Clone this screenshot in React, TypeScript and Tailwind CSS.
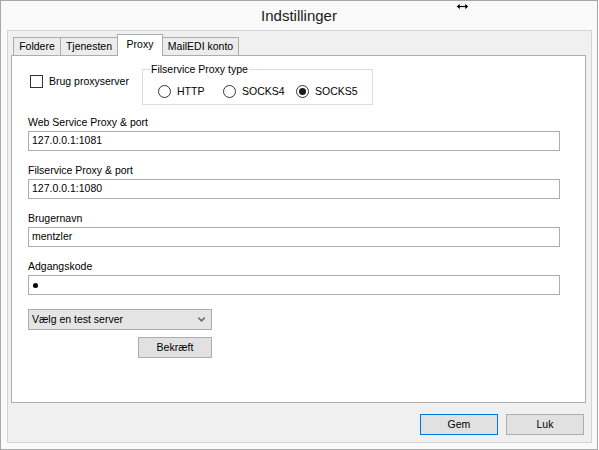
import { ChevronDown } from 'lucide-react';

function Checkbox() {
  return <div className="w-[13px] h-[13px] border border-[#333333] bg-white" />;
}

function Radio({ label, checked, width }: { label: string; checked?: boolean; width: string }) {
  return (
    <div className={`flex items-center ${width}`}>
      <div className="w-[13px] h-[13px] rounded-full border border-[#333333] bg-white flex items-center justify-center">
        {checked && <div className="w-[7px] h-[7px] rounded-full bg-[#1a1a1a]" />}
      </div>
      <span className="ml-[6px] leading-[13px]">{label}</span>
    </div>
  );
}

function Field({ label, value, password }: { label: string; value: string; password?: boolean }) {
  return (
    <div className="flex flex-col">
      <div className="h-[16px] leading-[16px]">{label}</div>
      <div className="mt-[1px] h-[20px] w-[532px] border border-[#adadad] bg-white pl-[3px] flex items-center">
        {password ? <div className="ml-[1px] w-[5px] h-[5px] rounded-full bg-black" /> : <span>{value}</span>}
      </div>
    </div>
  );
}

function Tab({ label, selected, width }: { label: string; selected?: boolean; width: string }) {
  if (selected) {
    return (
      <div
        className={`${width} -ml-px h-[22px] -mb-px relative z-10 bg-white border border-b-0 border-[#adadad] flex justify-center pt-[2px]`}
      >
        {label}
      </div>
    );
  }
  return (
    <div className={`${width} -ml-px first:ml-0 h-[18px] bg-[#ececec] border border-b-0 border-[#adadad] flex items-center justify-center`}>
      {label}
    </div>
  );
}

export default function App() {
  return (
    <div className="w-[599px] h-[450px] bg-white font-['Liberation_Sans',Arial,sans-serif] text-[10.5px] text-black relative">
      <div className="w-[598px] h-[450px] border border-[#a8a8a8] bg-[#f9f9f9] flex flex-col">
        <div className="h-[29px] flex items-center justify-center text-[15px] text-[#1a1a1a] pt-[1px]">
          Indstillinger
        </div>
        <div className="ml-[6px] w-[585px] h-[413px] border border-[#d4d4d4] bg-[#f0f0f0] flex flex-col pl-[3px] pr-[5px]">
          <div className="flex items-end pl-[2px] pt-[2px] h-[24px]">
            <Tab label="Foldere" width="w-[48px]" />
            <Tab label="Tjenesten" width="w-[58px]" />
            <Tab label="Proxy" width="w-[46px]" selected />
            <Tab label="MailEDI konto" width="w-[77px]" />
          </div>
          <div className="h-[348px] w-[575px] border border-[#adadad] bg-white px-[16px] pt-[13px]">
            <div className="flex h-[36px]">
              <div className="w-[114px] pt-[6px] pl-[2px] flex items-start">
                <Checkbox />
                <span className="ml-[6px] leading-[13px]">Brug proxyserver</span>
              </div>
              <div className="relative w-[231px] h-[36px] border border-[#dcdcdc]">
                <span className="absolute left-[7px] -top-[9px] bg-white px-[1px] leading-[16px]">
                  Filservice Proxy type
                </span>
                <div className="flex items-center mt-[15px] ml-[15px]">
                  <Radio label="HTTP" width="w-[65px]" />
                  <Radio label="SOCKS4" width="w-[73px]" />
                  <Radio label="SOCKS5" width="w-[70px]" checked />
                </div>
              </div>
            </div>
            <div className="mt-[9px] flex flex-col gap-[11px]">
              <Field label="Web Service Proxy & port" value="127.0.0.1:1081" />
              <Field label="Filservice Proxy & port" value="127.0.0.1:1080" />
              <Field label="Brugernavn" value="mentzler" />
              <Field label="Adgangskode" value="" password />
            </div>
            <div className="mt-[14px] w-[184px] h-[21px] border border-[#acacac] bg-[#e5e5e5] flex items-center justify-between pl-[3px] pr-[4px]">
              <span>Vælg en test server</span>
              <ChevronDown className="w-[11px] h-[11px] text-[#707070]" strokeWidth={3.5} />
            </div>
            <div className="mt-[7px] ml-[110px] w-[74px] h-[21px] border border-[#adadad] bg-[#e1e1e1] flex items-center justify-center">
              Bekræft
            </div>
          </div>
          <div className="mt-[11px] flex justify-end gap-[8px] pr-[2px]">
            <div className="w-[78px] h-[21px] border border-[#0078d7] bg-[#e1e1e1] flex items-center justify-center">
              Gem
            </div>
            <div className="w-[78px] h-[21px] border border-[#adadad] bg-[#e1e1e1] flex items-center justify-center">
              Luk
            </div>
          </div>
        </div>
      </div>
      <svg className="absolute left-[456px] top-[2px]" width="13" height="9" viewBox="0 0 13 9">
        <path d="M0.5 4.5 L4 1 V3.5 H9 V1 L12.5 4.5 L9 8 V5.5 H4 V8 Z" fill="#000" stroke="#fff" strokeWidth="0.8" />
      </svg>
    </div>
  );
}
